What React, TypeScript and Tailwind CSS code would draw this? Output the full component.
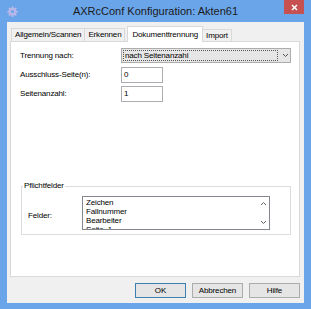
export default function App() {
    const items = ['Zeichen', 'Fallnummer', 'Bearbeiter', 'Seite_1']

    return (
        <div className="flex h-[309px] w-[311px] flex-col bg-[#6ba5e9] font-['Liberation_Sans',Arial,sans-serif] text-[8px] tracking-[-0.15px] text-black">
            {/* titelleiste */}
            <div className="relative flex h-[22px] shrink-0 items-center justify-center">
                <svg className="absolute left-[7px] top-[6px]" width="11" height="11" viewBox="0 0 24 24">
                    <path
                        fill="#b9b6e8"
                        d="M10.3 1h3.4l.5 3a8 8 0 0 1 2.2.9l2.5-1.8 2.4 2.4-1.8 2.5a8 8 0 0 1 .9 2.2l3 .5v3.4l-3 .5a8 8 0 0 1-.9 2.2l1.8 2.5-2.4 2.4-2.5-1.8a8 8 0 0 1-2.2.9l-.5 3h-3.4l-.5-3a8 8 0 0 1-2.2-.9l-2.5 1.8-2.4-2.4 1.8-2.5a8 8 0 0 1-.9-2.2l-3-.5v-3.4l3-.5a8 8 0 0 1 .9-2.2L3.1 5.5l2.4-2.4L8 4.9a8 8 0 0 1 2.2-.9z"
                    />
                    <circle cx="12" cy="12" r="3.5" fill="#6ba5e9" />
                </svg>
                <span className="mt-[1px] text-[11px] tracking-normal text-[#1a1a1a]">AXRcConf Konfiguration: Akten61</span>
                <div className="absolute right-[7px] top-0 flex h-[14px] w-[20px] items-center justify-center bg-[#c75050]">
                    <svg width="7" height="7" viewBox="0 0 7 7">
                        <path d="M1 1l5 5M6 1L1 6" stroke="#fff" strokeWidth="1.5" />
                    </svg>
                </div>
            </div>

            {/* client-bereich */}
            <div className="mx-[7px] mb-[6px] flex flex-1 flex-col bg-[#f0f0f0] pl-[3px] pr-[4px] pt-[4px]">
                {/* tabs */}
                <div className="flex h-[15px] items-end pl-[1px]">
                    <div className="flex h-[13px] items-center border border-b-0 border-[#d9d9d9] bg-[#f0f0f0] px-[3px]">Allgemein/Scannen</div>
                    <div className="flex h-[13px] items-center border border-b-0 border-l-0 border-[#d9d9d9] bg-[#f0f0f0] px-[3px]">Erkennen</div>
                    <div className="relative z-10 -mb-[1px] ml-[2px] flex h-[16px] items-center border border-b-0 border-[#d9d9d9] bg-white px-[4px]">Dokumenttrennung</div>
                    <div className="flex h-[12px] items-center border border-b-0 border-l-0 border-[#d9d9d9] bg-[#f0f0f0] px-[3px]">Import</div>
                </div>

                {/* tab-inhalt */}
                <div className="flex h-[236px] flex-col border border-[#d9d9d9] bg-white pl-[9px] pr-[8px] pt-[6px]">
                    <div className="flex h-[15px] items-center">
                        <span className="w-[101px]">Trennung nach:</span>
                        <div className="flex h-[15px] flex-1 items-center border border-[#acacac] bg-[#e6e6e6] pl-[1px]">
                            <div className="flex h-[11px] w-[155px] items-center border border-dotted border-[#555] px-[1px]">nach Seitenanzahl</div>
                            <svg className="ml-[4px]" width="7" height="5" viewBox="0 0 7 5">
                                <path d="M1 1l2.5 2.5L6 1" stroke="#555" fill="none" strokeWidth="1" />
                            </svg>
                        </div>
                    </div>

                    <div className="mt-[4px] flex h-[15px] items-center">
                        <span className="w-[101px]">Ausschluss-Seite(n):</span>
                        <div className="flex h-[16px] w-[42px] items-center border border-[#abadb3] bg-white px-[2px]">0</div>
                    </div>
                    <div className="mt-[4px] flex h-[16px] items-center">
                        <span className="w-[101px]">Seitenanzahl:</span>
                        <div className="flex h-[16px] w-[42px] items-center border border-[#abadb3] bg-white px-[2px]">1</div>
                    </div>

                    {/* pflichtfelder */}
                    <div className="relative mt-[84px] ml-[1px] h-[49px] border border-[#dcdcdc]">
                        <span className="absolute -top-[6px] left-[1px] bg-white px-[1px] leading-[10px]">Pflichtfelder</span>
                        <div className="flex items-start pl-[6px] pt-[9px]">
                            <span className="mt-[14px] w-[54px]">Felder:</span>
                            <div className="flex h-[34px] w-[188px] overflow-hidden border border-[#828790] bg-white">
                                <div className="flex flex-1 flex-col pl-[3px] pt-[1px] leading-[9px]">
                                    {items.map((it) => (
                                        <span key={it}>{it}</span>
                                    ))}
                                </div>
                                <div className="flex w-[12px] flex-col items-center justify-between py-[4px]">
                                    <svg width="7" height="5" viewBox="0 0 7 5">
                                        <path d="M1 4l2.5-2.5L6 4" stroke="#606060" fill="none" />
                                    </svg>
                                    <svg width="7" height="5" viewBox="0 0 7 5">
                                        <path d="M1 1l2.5 2.5L6 1" stroke="#606060" fill="none" />
                                    </svg>
                                </div>
                            </div>
                        </div>
                    </div>
                </div>

                {/* buttons */}
                <div className="mt-[6px] flex justify-end gap-[6px]">
                    <button className="h-[15px] w-[51px] border border-[#3c7fb1] bg-[#e5e5e5] text-[8px]">OK</button>
                    <button className="h-[15px] w-[51px] border border-[#acacac] bg-[#e5e5e5] text-[8px]">Abbrechen</button>
                    <button className="h-[15px] w-[51px] border border-[#acacac] bg-[#e5e5e5] text-[8px]">Hilfe</button>
                </div>
            </div>
        </div>
    )
}
